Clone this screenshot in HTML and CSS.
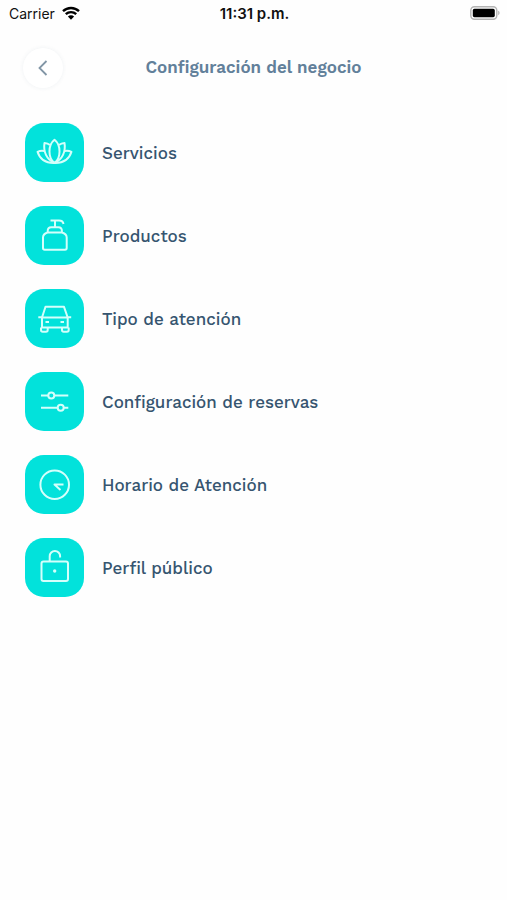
FILE: index.html
```html
<!DOCTYPE html>
<html lang="es">
<head>
<meta charset="utf-8">
<meta name="viewport" content="width=device-width, initial-scale=1">
<title>Configuración del negocio</title>
<link rel="stylesheet" href="styles.css">
</head>
<body>
<div class="status">
  <div class="carrier">
    <span>Carrier</span>
    <svg class="wifi" viewBox="0 0 18 14" aria-hidden="true">
      <path d="M1 5.2a11.6 11.6 0 0 1 16 0M3.8 8.2a7.6 7.6 0 0 1 10.4 0" fill="none" stroke="#000" stroke-width="2.4"/>
      <path d="M9 13.8 5.9 10.6a4.4 4.4 0 0 1 6.2 0z"/>
    </svg>
  </div>
  <time class="clock">11:31 p.m.</time>
  <svg class="battery" viewBox="0 0 30 14" aria-hidden="true">
    <rect x=".8" y=".8" width="26" height="12.4" rx="3.6" fill="#fff" stroke="#b4b4b4" stroke-width="1.4"/>
    <rect x="2.8" y="2.8" width="22" height="8.4" rx="1.6"/>
    <path d="M28.2 4.8c1.8.6 1.8 3.8 0 4.4z" fill="#b4b4b4"/>
  </svg>
</div>
<header class="header">
  <button class="back" type="button" aria-label="Volver">
    <svg viewBox="0 0 20 20" aria-hidden="true"><path d="M13.500 3 6.500 10l7 7"/></svg>
  </button>
  <h1 class="title">Configuración del negocio</h1>
</header>
<main>
  <nav class="menu">
    <a class="item" href="#servicios">
      <svg class="tile" viewBox="0 0 59 59" aria-hidden="true">
        <path d="M29.500 16.800C22.800 22 22.800 35 29.500 40c6.700-5 6.700-18 0-23.200z"/>
        <path d="M25 22c-1.600-1.300-3.400-1.900-5.500-2-1.400 8.500 2 16.500 10 20 8-3.500 11.400-11.500 10-20-2.100.1-3.900.7-5.500 2"/>
        <path d="M19.200 28c-2.200-.4-4.500-.2-6.700.8 2.300 7.200 8.500 11.500 17 11.200 8.500.3 14.700-4 17-11.200-2.200-1-4.500-1.200-6.700-.8"/>
      </svg>
      <span>Servicios</span>
    </a>
    <a class="item" href="#productos">
      <svg class="tile" viewBox="0 0 59 59" aria-hidden="true">
        <path d="M22.500 26.500h14.500q4.700 1.500 4.700 5v10.500q0 1.700-1.700 1.700H19.700q-1.700 0-1.700-1.700V31.500q0-3.500 4.500-5zM22.700 26.500v-1.500q0-3.800 3.500-3.800h7.200q3.500 0 3.500 3.800v1.500M30 21v-6.300M25.500 14.500H34q4 0 4.500 3.500"/>
      </svg>
      <span>Productos</span>
    </a>
    <a class="item" href="#tipo-atencion">
      <svg class="tile" viewBox="0 0 59 59" aria-hidden="true">
        <path d="M17 28.500 20.500 17.800h18.500l3.700 10.700zM17 28.500v10h25.700v-10M13.300 28.200H17M42.700 28.200h3.500M16 38.500v2.500q0 1.700 1.700 1.700H21q1.700 0 1.700-1.700v-2.500M37 38.500v2.500q0 1.700 1.700 1.700H42q1.700 0 1.700-1.700v-2.500M20.500 33h3.500M35.500 33H39"/>
      </svg>
      <span>Tipo de atención</span>
    </a>
    <a class="item" href="#reservas">
      <svg class="tile" viewBox="0 0 59 59" aria-hidden="true">
        <path d="M16 23.500h7.300M29.300 23.500h14M16 35.700h16.700M38.700 35.700h4.600"/>
        <circle cx="26.300" cy="23.500" r="3"/>
        <circle cx="35.700" cy="35.700" r="3"/>
      </svg>
      <span>Configuración de reservas</span>
    </a>
    <a class="item" href="#horario">
      <svg class="tile" viewBox="0 0 59 59" aria-hidden="true">
        <circle cx="29.700" cy="29.700" r="14.300"/>
        <path d="M38.500 29.500H29.500l6 5.500"/>
      </svg>
      <span>Horario de Atención</span>
    </a>
    <a class="item" href="#perfil">
      <svg class="tile" viewBox="0 0 59 59" aria-hidden="true">
        <rect x="16.500" y="23.500" width="26.500" height="19.500" rx="2"/>
        <path d="M24.700 23.500v-5.300a5.200 5.200 0 0 1 10.400 0v1.300"/>
        <circle class="dot" cx="29.700" cy="33" r="1.700"/>
      </svg>
      <span>Perfil público</span>
    </a>
  </nav>
</main>
</body>
</html>
```
FILE: styles.css
```css
* {
  box-sizing: border-box;
}

body {
  margin: 0;
  background: #fefefe;
  font-family: "Work Sans", Inter, sans-serif;
  color: #365570;
}

.status {
  display: grid;
  grid-template-columns: 1fr auto 1fr;
  align-items: center;
  height: 26px;
  padding: 0 7px 0 9px;
  font-family: Inter, sans-serif;
  font-size: 14px;
  color: #111;
}

.carrier {
  display: flex;
  align-items: center;
  gap: 7px;
}

.wifi {
  width: 18px;
  height: 14px;
}

.clock {
  font-size: 15px;
  font-weight: 600;
}

.battery {
  width: 30px;
  height: 14px;
  justify-self: end;
}

.header {
  display: grid;
  grid-template-columns: 40px 1fr 40px;
  align-items: center;
  padding: 22px 23px 0;
}

.back {
  display: grid;
  place-items: center;
  width: 40px;
  height: 40px;
  padding: 0;
  border: 0;
  border-radius: 50%;
  background: #fff;
  box-shadow: 0 0 4px rgba(54, 85, 112, 0.08);
}

.back svg {
  width: 20px;
  height: 20px;
  fill: none;
  stroke: #8296a6;
  stroke-width: 1.8;
}

.title {
  margin: 0;
  padding-bottom: 2px;
  font-size: 17px;
  font-weight: 600;
  line-height: 24px;
  text-align: center;
  color: #62809a;
}

.menu {
  display: flex;
  flex-direction: column;
  gap: 24px;
  padding: 35px 25px;
}

.item {
  display: flex;
  align-items: center;
  gap: 18px;
  font-size: 17px;
  font-weight: 500;
  color: inherit;
  text-decoration: none;
}

.tile {
  flex: none;
  width: 59px;
  height: 59px;
  border-radius: 19px;
  background: #02e2db;
  fill: none;
  stroke: #d4fffb;
  stroke-width: 2;
  stroke-linejoin: round;
}

.dot {
  fill: #d4fffb;
  stroke: none;
}
```
